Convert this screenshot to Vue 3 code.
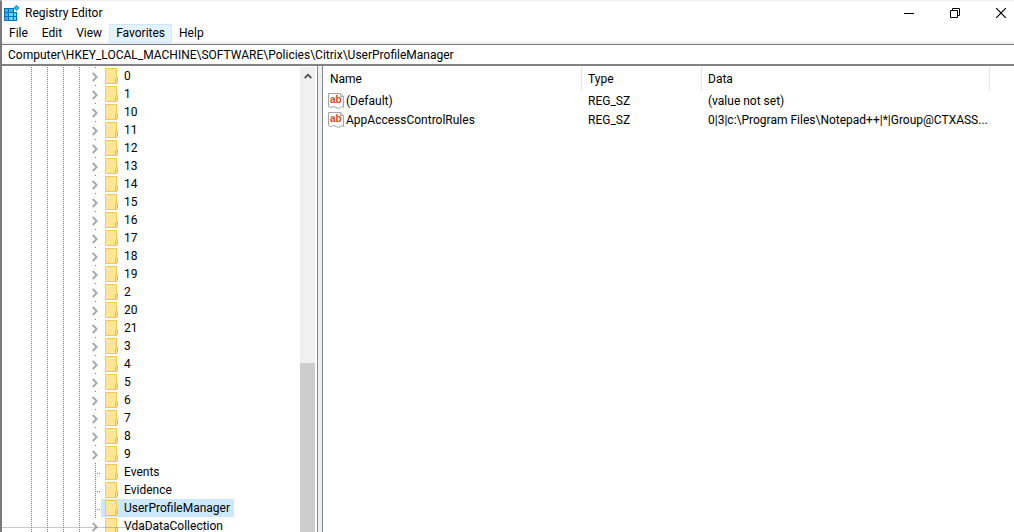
<script setup>
import { ref } from 'vue'

const menus = ['File', 'Edit', 'View', 'Favorites', 'Help']
const activeMenu = ref('Favorites')
const address = ref('Computer\\HKEY_LOCAL_MACHINE\\SOFTWARE\\Policies\\Citrix\\UserProfileManager')
const selected = ref('UserProfileManager')

const numbered = ['0', '1', '10', '11', '12', '13', '14', '15', '16', '17', '18', '19', '2', '20', '21', '3', '4', '5', '6', '7', '8', '9']
const keys = [
  ...numbered.map((name) => ({ name, branch: true })),
  { name: 'Events', branch: false },
  { name: 'Evidence', branch: false },
  { name: 'UserProfileManager', branch: false },
  { name: 'VdaDataCollection', branch: true }
]

const values = [
  { name: '(Default)', type: 'REG_SZ', data: '(value not set)' },
  { name: 'AppAccessControlRules', type: 'REG_SZ', data: '0|3|c:\\Program Files\\Notepad++|*|Group@CTXASS...' }
]
</script>

<template>
  <div class="window">
    <header class="title-bar">
      <svg class="app-icon" width="16" height="16" viewBox="0 0 16 16" aria-hidden="true">
        <path d="M0 3H10V7H13V16H0Z" fill="#0873b5" />
        <path d="M1 4h3v3H1zM5 4h4v3H5zM1 8h3v3H1zM1 12h3v3H1z" fill="#35b5ec" />
        <path d="M5 8h4v3H5zM5 12h4v3H5zM10 8h2v3h-2zM10 12h2v3h-2z" fill="#65d5fc" />
        <path d="M12.5 0L15.5 3L12.5 6L9.5 3Z" fill="#1686c1" />
        <path d="M12.5 1.5L14 3L12.5 4.5L11 3Z" fill="#4bc7f6" />
      </svg>
      <h1>Registry Editor</h1>
      <div class="controls">
        <button type="button" aria-label="Minimize">
          <svg width="10" height="10" viewBox="0 0 10 10"><path d="M0 5.5H10" stroke="#000" /></svg>
        </button>
        <button type="button" aria-label="Restore">
          <svg width="10" height="10" viewBox="0 0 10 10" fill="none" stroke="#000">
            <path d="M.5 2.5H7.5V9.5H.5ZM2.5 2.5V.5H9.5V7.5H7.5" />
          </svg>
        </button>
        <button type="button" aria-label="Close">
          <svg width="10" height="10" viewBox="0 0 10 10"><path d="M0 0L10 10M10 0L0 10" stroke="#000" stroke-width="1.2" /></svg>
        </button>
      </div>
    </header>

    <nav class="menu-bar">
      <button v-for="menu in menus" :key="menu" type="button" :class="{ active: menu === activeMenu }" @click="activeMenu = menu">{{ menu }}</button>
    </nav>

    <div class="address">
      <input v-model="address" type="text" aria-label="Address" spellcheck="false" />
    </div>

    <main class="panes">
      <section class="tree-pane">
        <ul class="tree">
          <li v-for="key in keys" :key="key.name">
            <span class="guide"></span><span class="guide"></span><span class="guide"></span><span class="guide"></span>
            <button v-if="key.branch" class="expander" type="button" :aria-label="`Expand ${key.name}`">
              <svg width="6" height="10" viewBox="0 0 6 10" fill="none" stroke="#a6a6a6" stroke-width="1.8"><path d="M.7 1L4.7 5L.7 9" /></svg>
            </button>
            <span v-else class="leaf"></span>
            <button class="key" type="button" :class="{ selected: key.name === selected }" @click="selected = key.name">
              <svg width="13" height="16" viewBox="0 0 13 16" aria-hidden="true">
                <path d="M.5 .5H11.5V15.5H.5Z" fill="#ffe694" stroke="#efca55" />
                <path d="M10.5 15.5V10.5L11.5 9.5H12.5V14.5L11.5 15.5Z" fill="#ffe591" stroke="#e9bd38" />
              </svg>
              <span>{{ key.name }}</span>
            </button>
          </li>
        </ul>
        <div class="scrollbar">
          <button type="button" aria-label="Scroll up">
            <svg width="8" height="6" viewBox="0 0 8 6" fill="none" stroke="#505050" stroke-width="1.8"><path d="M.7 5L4 1.7L7.3 5" /></svg>
          </button>
          <div class="thumb"></div>
        </div>
        <div class="hint-frame"></div>
      </section>
      <div class="splitter"></div>
      <section class="value-pane">
        <table>
          <colgroup><col class="name-col" /><col class="type-col" /><col class="data-col" /><col /></colgroup>
          <thead>
            <tr><th scope="col">Name</th><th scope="col">Type</th><th scope="col">Data</th><td></td></tr>
          </thead>
          <tbody>
            <tr v-for="value in values" :key="value.name">
              <td>
                <div class="value-name">
                  <svg width="16" height="16" viewBox="0 0 16 16" aria-hidden="true">
                    <path d="M.5 .5H12.5L15.5 3.5V14.5L13.5 13.5L11 15.5L8 14.5L6 13.5L3 14.5L.5 13.5Z" fill="#fff" stroke="#a5a5a5" />
                    <path d="M12.5 .5V3.5H15.5" fill="none" stroke="#a5a5a5" />
                    <text x="2" y="10">ab</text>
                  </svg>
                  <span>{{ value.name }}</span>
                </div>
              </td>
              <td>{{ value.type }}</td>
              <td>{{ value.data }}</td>
              <td></td>
            </tr>
          </tbody>
        </table>
      </section>
    </main>
  </div>
</template>

<style>
body { margin: 0; background: #fff; }
</style>

<style scoped>
* { box-sizing: border-box; }
.window {
  display: flex;
  flex-direction: column;
  height: 100vh;
  overflow: hidden;
  border-top: 1px solid #efefef;
  border-left: 2px solid #7a7a7e;
  background: #fff;
  color: #000;
  font: 12px/18px Roboto, "Open Sans", sans-serif;
}
button {
  padding: 0;
  border: 0;
  background: none;
  color: inherit;
  font: inherit;
}
svg { display: block; flex: none; }
.title-bar {
  display: flex;
  align-items: center;
  flex: none;
  height: 23px;
  padding-left: 2px;
}
h1 { flex: 1; margin: 0 0 0 5px; font: inherit; }
.controls { display: flex; gap: 20px; }
.controls button {
  display: grid;
  place-items: center;
  width: 26px;
  height: 22px;
}
.menu-bar {
  display: flex;
  flex: none;
  height: 20px;
  border-bottom: 2px solid #f0f0f0;
}
.menu-bar button {
  height: 19px;
  padding: 0 6px;
  border: 1px solid transparent;
  line-height: 17px;
}
.menu-bar .active { border-color: #cce8ff; background: #e5f3ff; }
.address {
  flex: none;
  border-top: 1px solid #777;
  border-bottom: 2px solid #828287;
}
.address input {
  display: block;
  width: 100%;
  height: 19px;
  padding: 0 6px;
  border: 0;
  outline: 0;
  background: #fff;
  color: inherit;
  font: inherit;
}
.panes { display: flex; flex: 1; min-height: 0; }
.tree-pane {
  position: relative;
  display: flex;
  flex: 0 0 315px;
  overflow: hidden;
}
.tree {
  flex: 1;
  min-width: 0;
  margin: 0;
  padding: 1px 0 0 29px;
  list-style: none;
}
.tree li { display: flex; height: 18px; }
.guide {
  flex: none;
  width: 16px;
  background: repeating-linear-gradient(#808080 0 1px, transparent 1px 2px) 0 0 / 1px 100% no-repeat;
}
.expander, .leaf { flex: none; width: 6px; }
.expander {
  display: flex;
  align-items: center;
  padding-top: 2px;
  background: linear-gradient(#808080, #808080) 0 0 / 1px 1px no-repeat;
}
.expander svg { margin-left: -3px; }
.leaf {
  background:
    repeating-linear-gradient(#808080 0 1px, transparent 1px 2px) 0 0 / 1px 100% no-repeat,
    repeating-linear-gradient(90deg, #808080 0 1px, transparent 1px 2px) 0 10px / 100% 1px no-repeat;
}
.key {
  display: flex;
  align-items: center;
  gap: 6px;
  height: 18px;
  padding: 0 4px;
}
.key.selected { background: #cce8ff; }
.scrollbar {
  display: flex;
  flex-direction: column;
  flex: none;
  width: 15px;
  margin: 1px 2px 0 0;
  background: #f0f0f0;
}
.scrollbar button { display: grid; place-items: center; height: 18px; flex: none; }
.thumb { height: 36.4%; margin-top: auto; background: #cdcdcd; }
.hint-frame {
  position: absolute;
  bottom: 0;
  left: 0;
  width: 202px;
  height: 5px;
  border: solid rgba(120, 120, 120, .4);
  border-width: 1px 1px 0 0;
  pointer-events: none;
}
.splitter {
  flex: none;
  width: 6px;
  border: solid #828790;
  border-width: 0 1px;
  background: #f0f0f0;
}
.value-pane { flex: 1; min-width: 0; overflow: hidden; }
table { width: 100%; border-collapse: separate; border-spacing: 0; table-layout: fixed; }
.name-col { width: 259px; }
.type-col { width: 120px; }
.data-col { width: 288px; }
th, td { height: 19px; padding: 0 6px; font-weight: 400; text-align: left; white-space: nowrap; }
thead th, thead td { height: 25px; }
th {
  background: linear-gradient(#e5e5e5, #e5e5e5) 100% 1px / 1px 24px no-repeat;
}
th:first-child { padding-left: 7px; }
td:first-child { padding-left: 5px; }
.value-name { display: flex; align-items: center; gap: 2px; }
.value-name text { fill: #d34b27; font: 700 10px "Liberation Sans", sans-serif; }
</style>
